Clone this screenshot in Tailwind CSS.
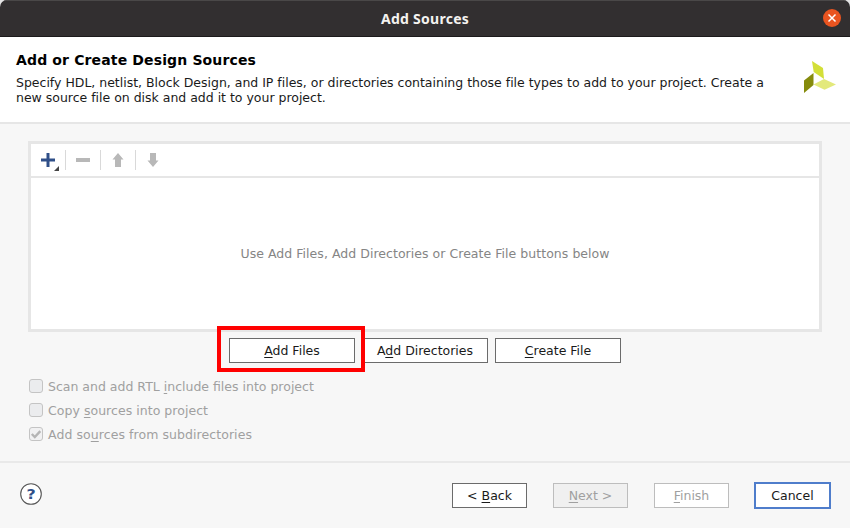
<!DOCTYPE html>
<html lang="en">
<head>
<meta charset="utf-8">
<title>Add Sources</title>
<script src="https://cdn.jsdelivr.net/npm/@tailwindcss/browser@4"></script>
</head>
<body class="bg-[#e4e4e4]">
<div class="w-[850px] h-[528px] flex flex-col overflow-hidden rounded-t-[7px] bg-[#f7f7f7] font-['DejaVu_Sans',sans-serif] text-[12.5px] leading-[15px] text-[#1a1a1a]">
  <header class="relative h-[37px] shrink-0 flex items-center justify-center bg-[#322f30] border-t border-t-[#4a4848] border-b border-b-[#1c1a1b]">
    <h1 class="font-['Noto_Sans',sans-serif] font-bold text-[14px] leading-5 tracking-[0.27px] text-[#f4f2ef]">Add Sources</h1>
    <button class="absolute right-[9px] top-[8px] size-[18px]" aria-label="Close">
      <svg width="18" height="18" viewBox="0 0 18 18"><circle cx="9" cy="9" r="9" fill="#e95420"/><path d="M5.500 5.500l7 7M12.500 5.500l-7 7" stroke="#fff" stroke-width="1.500"/></svg>
    </button>
  </header>
  <section class="h-[87px] shrink-0 flex justify-between bg-white border-b-2 border-[#e6e6e6] pl-4 pr-[14px]">
    <div class="pt-[14px]">
      <h2 class="font-bold text-[14px] leading-[18px] tracking-[0.14px] text-black whitespace-nowrap">Add or Create Design Sources</h2>
      <p class="mt-[6px] whitespace-nowrap tracking-[-0.01px]">Specify HDL, netlist, Block Design, and IP files, or directories containing those file types to add to your project. Create a<br>new source file on disk and add it to your project.</p>
    </div>
    <svg class="mt-[23px] shrink-0" width="32" height="34" viewBox="0 0 32 34"><path d="M8 1l11 7 1 11-10.300-7z" fill="#d3df38"/><path d="M0 20.500L9.500 13v12L0 33z" fill="#858b0c"/><path d="M9.500 24.500L20 19l12 5.500L20.500 29.800z" fill="#e3e97b"/></svg>
  </section>
  <main class="h-[337px] shrink-0 px-7 pt-[17px]">
    <div class="h-[191px] flex flex-col bg-white border-[3px] border-[#e6e6e6]">
      <div class="h-[34px] shrink-0 flex items-center border-b-2 border-[#e6e6e6]">
        <div class="w-[34px] flex justify-end"><svg width="24" height="24" viewBox="0 0 24 24"><path d="M0 12h14M7 5v14" stroke="#2f4f88" stroke-width="3"/><path d="M18 18v5h-5z" fill="#444"/></svg></div>
        <div class="w-px h-5 bg-[#d9d9d9]"></div>
        <div class="w-[34px] flex justify-center"><svg width="14" height="14" viewBox="0 0 14 14"><path d="M0 7h14" stroke="#b8b8b8" stroke-width="4"/></svg></div>
        <div class="w-px h-5 bg-[#d9d9d9]"></div>
        <div class="w-[34px] flex justify-center"><svg width="12" height="14" viewBox="0 0 12 14"><path d="M6 0l5.500 6.500H9V14H3V6.500H.5z" fill="#b8b8b8"/></svg></div>
        <div class="w-px h-5 bg-[#d9d9d9]"></div>
        <div class="w-[34px] flex justify-center"><svg width="12" height="14" viewBox="0 0 12 14"><path d="M6 14l5.500-6.500H9V0H3v7.500H.5z" fill="#b8b8b8"/></svg></div>
      </div>
      <div class="flex-1 flex items-center justify-center text-[#858585]"><span class="tracking-[0.04px]">Use Add Files, Add Directories or Create File buttons below</span></div>
    </div>
    <div class="mt-[6px] flex justify-center gap-[7px]">
      <div class="relative">
        <button class="block w-[126px] h-[25px] bg-white border border-[#6b6b6b]"><u class="underline-offset-2">A</u>dd Files</button>
        <div class="absolute -left-3 -top-3 w-[148px] h-[46px] border-[4px] border-[#ff0000] z-10"></div>
      </div>
      <button class="w-[126px] h-[25px] bg-white border border-[#6b6b6b]">A<u class="underline-offset-2">d</u>d Directories</button>
      <button class="w-[126px] h-[25px] bg-white border border-[#6b6b6b]"><u class="underline-offset-2">C</u>reate File</button>
    </div>
    <div class="mt-[16px] flex flex-col gap-[9px] text-[#a0a0a0]">
      <label class="flex items-center gap-[5px] h-[15px]"><span class="size-[15px] flex items-center justify-center"><span class="size-[14px] -mt-px ml-px rounded-[3px] border border-[#c4c4c4] bg-[#ebecee]"></span></span><span>Scan and add RTL <u class="underline-offset-2">i</u>nclude files into project</span></label>
      <label class="flex items-center gap-[5px] h-[15px]"><span class="size-[15px] flex items-center justify-center"><span class="size-[14px] -mt-px ml-px rounded-[3px] border border-[#c4c4c4] bg-[#ebecee]"></span></span><span class="tracking-[0.04px]">Copy <u class="underline-offset-2">s</u>ources into project</span></label>
      <label class="flex items-center gap-[5px] h-[15px]"><span class="size-[15px] flex items-center justify-center"><span class="size-[14px] -mt-px ml-px rounded-[3px] border border-[#c4c4c4] bg-[#f1f1f2]"><svg width="12" height="12" viewBox="0 0 12 12"><path d="M1.800 6l3 3L10.300 3.200" fill="none" stroke="#b5b5b5" stroke-width="2.400"/></svg></span></span><span class="tracking-[0.07px]">Add so<u class="underline-offset-2">u</u>rces from subdirectories</span></label>
    </div>
  </main>
  <footer class="flex-1 flex items-start pl-5 pr-[19px] border-t-2 border-[#e9e9e9]">
    <button class="mt-[20px] size-[22px]" aria-label="Help"><svg width="22" height="22" viewBox="0 0 22 22"><circle cx="11" cy="11" r="10.300" fill="#fff" stroke="#555" stroke-width="1.100"/><text transform="translate(11 15.800) scale(1.180 1)" text-anchor="middle" font-family="DejaVu Sans" font-weight="bold" font-size="13.500" fill="#2f4f88">?</text></svg></button>
    <div class="ml-auto flex items-center mt-[19px]">
      <button class="w-[75px] h-[25px] bg-white border border-[#6b6b6b]">&lt; <u class="underline-offset-2">B</u>ack</button>
      <button class="ml-[26px] w-[75px] h-[25px] bg-[#f0f0f0] border border-[#bdbdbd] text-[#a0a0a0]"><u class="underline-offset-2">N</u>ext &gt;</button>
      <button class="ml-[26px] w-[75px] h-[25px] bg-white border border-[#bdbdbd] text-[#a0a0a0]"><u class="underline-offset-2">F</u>inish</button>
      <button class="ml-[25px] w-[77px] h-[27px] bg-white border-2 border-[#4f7dcb]">Cancel</button>
    </div>
  </footer>
</div>
</body>
</html>
